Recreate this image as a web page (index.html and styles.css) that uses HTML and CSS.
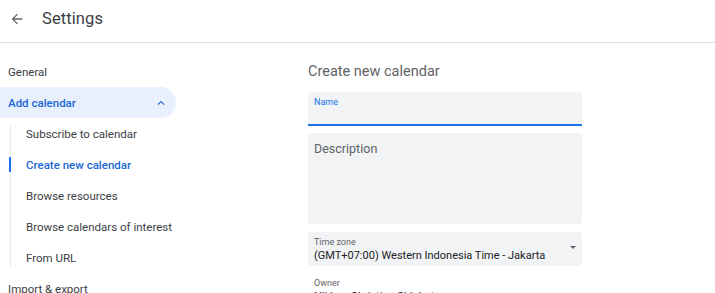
FILE: index.html
```html
<!DOCTYPE html>
<html lang="en">
<head>
	<meta charset="UTF-8">
	<title>Settings</title>
	<link rel="stylesheet" href="styles.css">
</head>
<body>
<div class="topbar">
	<a href="#" class="back">
		<svg width="16" height="16" viewBox="0 0 24 24"><path d="M20 11H7.83l5.59-5.59L12 4l-8 8 8 8 1.41-1.41L7.83 13H20v-2z" fill="#5f6368"/></svg>
	</a>
	<h1 class="title">Settings</h1>
</div>
<div class="page">
	<ul class="nav">
		<li class="nav-item">General</li>
		<li class="nav-item open">Add calendar
			<svg class="chev" width="14" height="14" viewBox="0 0 24 24"><path d="M7.41 15.41L12 10.83l4.59 4.58L18 14l-6-6-6 6z" fill="#1967d2"/></svg>
		</li>
		<li class="sub">
			<ul>
				<li class="sub-item">Subscribe to calendar</li>
				<li class="sub-item active">Create new calendar</li>
				<li class="sub-item">Browse resources</li>
				<li class="sub-item">Browse calendars of interest</li>
				<li class="sub-item">From URL</li>
			</ul>
		</li>
		<li class="nav-item">Import &amp; export</li>
	</ul>
	<div class="content">
		<h2 class="heading">Create new calendar</h2>
		<div class="field focused">
			<span class="label">Name</span>
		</div>
		<div class="field area">
			<span class="placeholder">Description</span>
		</div>
		<div class="field select">
			<span class="label">Time zone</span>
			<span class="value">(GMT+07:00) Western Indonesia Time - Jakarta</span>
			<i class="caret"></i>
		</div>
		<div class="owner">
			<span class="label">Owner</span>
			<span class="value">Nikhen Christian Sidabutar</span>
		</div>
	</div>
</div>
</body>
</html>
```

FILE: styles.css
```css
body,div,ul,li,h1,h2,p { margin:0; padding:0; }
body { background:#fff; color:#3c4043; font-family: Roboto, "Liberation Sans", Arial, sans-serif; overflow:hidden; }
ul,li { list-style:none; }
a { text-decoration:none; }

.topbar {
	height: 43px;
	border-bottom: 1px solid #e0e0e0;
	display: flex;
	align-items: center;
	padding-bottom: 5px;
	box-sizing: border-box;
}
.back {
	display: flex;
	width: 16px;
	height: 16px;
	margin: 0 17px 0 9px;
}
.title {
	font-size: 16.5px;
	font-weight: normal;
	color: #3c4043;
	letter-spacing: 0.1px;
}

.page {
	display: flex;
}
.nav {
	width: 308px;
	flex-shrink: 0;
	padding-top: 13px;
	font-size: 11.5px;
}
.nav-item {
	height: 31px;
	display: flex;
	align-items: center;
	padding-left: 8px;
	color: #3c4043;
}
.nav-item.open {
	width: 168px;
	background: #e8f0fe;
	border-radius: 0 16px 16px 0;
	color: #1967d2;
	font-weight: 500;
	justify-content: space-between;
}
.chev {
	margin-right: 8px;
}
.sub {
	position: relative;
}
.sub::before {
	content: "";
	position: absolute;
	left: 10px;
	top: 7px;
	bottom: 6px;
	width: 1px;
	background: #e8eaed;
}
.sub-item {
	height: 31px;
	display: flex;
	align-items: center;
	padding-left: 26px;
	color: #3c4043;
	position: relative;
}
.sub-item.active {
	color: #1967d2;
	font-weight: 500;
}
.sub-item.active::before {
	content: "";
	position: absolute;
	left: 9px;
	top: 8px;
	bottom: 8px;
	width: 2px;
	background: #1a73e8;
}

.content {
	width: 274px;
	padding-top: 19px;
	display: flex;
	flex-direction: column;
}
.heading {
	font-size: 14.5px;
	line-height: 20px;
	font-weight: normal;
	color: #5f6368;
	margin-bottom: 10px;
}
.field {
	background: #f1f3f4;
	border-radius: 4px 4px 0 0;
	padding: 4px 6px 0;
	box-sizing: border-box;
	position: relative;
}
.label {
	display: block;
	font-size: 9px;
	line-height: 12px;
	color: #5f6368;
}
.field.focused {
	height: 34px;
	border-bottom: 2px solid #1a73e8;
	margin-bottom: 7px;
}
.field.focused .label {
	color: #1a73e8;
}
.field.area {
	height: 91px;
	border-radius: 4px;
	padding-top: 5px;
	margin-bottom: 8px;
}
.placeholder {
	font-size: 12.5px;
	color: #5f6368;
}
.field.select {
	height: 34px;
	border-radius: 4px;
	padding-top: 4px;
}
.value {
	display: block;
	font-size: 11px;
	line-height: 15px;
	color: #202124;
}
.caret {
	position: absolute;
	right: 6px;
	top: 14px;
	border-left: 3px solid transparent;
	border-right: 3px solid transparent;
	border-top: 3px solid #5f6368;
}
.owner {
	padding: 11px 6px 0;
}
```
